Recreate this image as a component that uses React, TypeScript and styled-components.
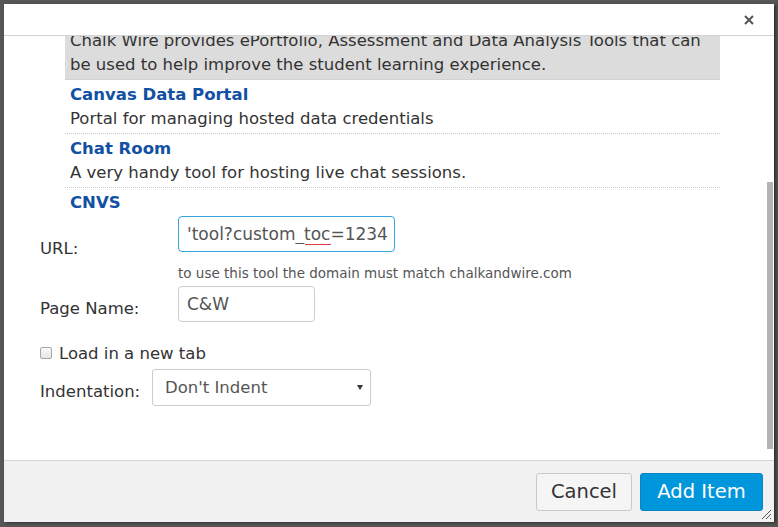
import styled, { createGlobalStyle } from "styled-components";

const GlobalStyle = createGlobalStyle`
  html, body {
    margin: 0;
    padding: 0;
    background: #565656;
  }
  body {
    font-family: "DejaVu Sans", Verdana, sans-serif;
    color: #333;
  }
`;

const Overlay = styled.div`
  width: 778px;
  height: 527px;
  padding: 4px 0 0 4px;
  box-sizing: border-box;
  background: #565656;
  overflow: hidden;
`;

const Dialog = styled.div`
  position: relative;
  width: 770px;
  height: 518px;
  background: #fff;
  display: flex;
  flex-direction: column;
  box-shadow: 2px 1px 3px rgba(0, 0, 0, 0.45);
`;

const Header = styled.div`
  height: 31px;
  flex: none;
  border-bottom: 1px solid #d4d4d4;
  display: flex;
  align-items: center;
  justify-content: flex-end;
  padding-right: 20px;
`;

const CloseButton = styled.button`
  border: 0;
  background: none;
  padding: 0;
  width: 10px;
  height: 10px;
  display: flex;
  cursor: pointer;
`;

const Body = styled.div`
  flex: 1;
  display: flex;
  overflow: hidden;
`;

const Content = styled.div`
  flex: 1;
  overflow: hidden;
`;

const ScrollTrack = styled.div`
  width: 7px;
  flex: none;
  padding-left: 1px;
`;

const ScrollThumb = styled.div`
  width: 6px;
  height: 267px;
  margin-top: 146px;
  background: #b4b4b4;
`;

const ToolList = styled.div`
  height: 175px;
  margin: 0 46px 0 61px;
  overflow: hidden;
`;

const ToolScroll = styled.ul`
  list-style: none;
  margin: -34px 0 0;
  padding: 0;
`;

const ToolItem = styled.li<{ $selected?: boolean }>`
  padding: 3px 5px 2px;
  border-bottom: 1px dotted #c9c9c9;
  background: ${(p) => (p.$selected ? "#dcdcdc" : "transparent")};
  font-size: 16.5px;
  line-height: 24px;
`;

const ToolName = styled.a`
  display: block;
  color: #1150a2;
  font-weight: bold;
  text-decoration: none;
`;

const ToolDesc = styled.div`
  color: #333;
`;

const Form = styled.div`
  padding: 5px 0 0 36px;
  font-size: 16.5px;
`;

const FieldGrid = styled.div`
  display: grid;
  grid-template-columns: 138px auto;
  row-gap: 5px;
`;

const Label = styled.label<{ $offset?: number }>`
  align-self: center;
  padding-top: ${(p) => p.$offset ?? 0}px;
  color: #333;
`;

const FieldCell = styled.div`
  display: flex;
  flex-direction: column;
  align-items: flex-start;
`;

const InputWrap = styled.div`
  position: relative;
`;

const TextInput = styled.input<{ $width: number; $focused?: boolean }>`
  display: block;
  width: ${(p) => p.$width}px;
  height: 36px;
  box-sizing: border-box;
  padding: 0 6px 0 8px;
  border: 1px solid ${(p) => (p.$focused ? "#33a5dd" : "#ccc")};
  border-radius: 4px;
  font: inherit;
  font-size: 17px;
  color: #555;
  background: #fff;
  outline: none;
`;

const SpellMark = styled.svg`
  position: absolute;
  left: 127px;
  top: 27px;
  pointer-events: none;
`;

const Hint = styled.div`
  margin-top: 13px;
  font-size: 13.5px;
  line-height: 16px;
  color: #555;
`;

const CheckRow = styled.label`
  display: flex;
  align-items: center;
  gap: 7px;
  height: 20px;
  margin-top: 21px;
  color: #333;
`;

const Checkbox = styled.input`
  appearance: none;
  width: 12px;
  height: 12px;
  margin: 0;
  border: 1px solid #a8a8a8;
  border-radius: 2px;
  background: linear-gradient(#fafafa, #e6e6e6);
`;

const SelectRow = styled.div`
  display: flex;
  align-items: center;
  gap: 8px;
  margin-top: 6px;
`;

const SelectLabel = styled.label`
  width: 104px;
  white-space: nowrap;
  padding-top: 7px;
  color: #333;
`;

const SelectWrap = styled.div`
  position: relative;
  width: 219px;
`;

const Select = styled.select`
  appearance: none;
  width: 100%;
  height: 37px;
  padding: 0 24px 0 12px;
  border: 1px solid #ccc;
  border-radius: 3px;
  background: #fff;
  font: inherit;
  font-size: 16.5px;
  color: #555;
`;

const SelectArrow = styled.span`
  position: absolute;
  right: 8px;
  top: 16px;
  width: 0;
  height: 0;
  border-left: 3px solid transparent;
  border-right: 3px solid transparent;
  border-top: 5px solid #333;
  pointer-events: none;
`;

const Footer = styled.div`
  height: 61px;
  flex: none;
  border-top: 1px solid #d6d6d6;
  background: #f1f1f1;
  display: flex;
  align-items: center;
  justify-content: flex-end;
  gap: 8px;
  padding-right: 11px;
`;

const Button = styled.button<{ $primary?: boolean; $width: number }>`
  width: ${(p) => p.$width}px;
  height: 38px;
  padding: 0;
  border-radius: 3px;
  font: inherit;
  font-size: 19.5px;
  border: 1px solid ${(p) => (p.$primary ? "#0a83c0" : "#cacaca")};
  background: ${(p) => (p.$primary ? "#0096db" : "#f5f5f5")};
  color: ${(p) => (p.$primary ? "#fff" : "#333")};
  cursor: pointer;
`;

const Grip = styled.svg`
  position: absolute;
  right: 2px;
  bottom: 2px;
`;

const tools = [
  {
    name: "Chalk & Wire",
    desc: "Chalk Wire provides ePortfolio, Assessment and Data Analysis Tools that can be used to help improve the student learning experience.",
    selected: true,
  },
  { name: "Canvas Data Portal", desc: "Portal for managing hosted data credentials" },
  { name: "Chat Room", desc: "A very handy tool for hosting live chat sessions." },
  { name: "CNVS", desc: "Course navigation and video services." },
];

export default function App() {
  return (
    <>
      <GlobalStyle />
      <Overlay>
        <Dialog>
          <Header>
            <CloseButton aria-label="Close">
              <svg width="10" height="10" viewBox="0 0 10 10">
                <path d="M1 1L9 9M9 1L1 9" stroke="#555" strokeWidth="2" />
              </svg>
            </CloseButton>
          </Header>
          <Body>
            <Content>
              <ToolList>
                <ToolScroll>
                  {tools.map((t) => (
                    <ToolItem key={t.name} $selected={t.selected}>
                      <ToolName href="#">{t.name}</ToolName>
                      <ToolDesc>{t.desc}</ToolDesc>
                    </ToolItem>
                  ))}
                </ToolScroll>
              </ToolList>
              <Form>
                <FieldGrid>
                  <Label>URL:</Label>
                  <FieldCell>
                    <InputWrap>
                      <TextInput $width={217} $focused readOnly value="'tool?custom_toc=1234" />
                      {/* spell-check squiggle under "toc" */}
                      <SpellMark width="26" height="3" viewBox="0 0 26 3">
                        <path
                          d="M0 2L1 1L2 2L3 1L4 2L5 1L6 2L7 1L8 2L9 1L10 2L11 1L12 2L13 1L14 2L15 1L16 2L17 1L18 2L19 1L20 2L21 1L22 2L23 1L24 2L25 1L26 2"
                          stroke="#e0393e"
                          strokeWidth="1"
                          fill="none"
                        />
                      </SpellMark>
                    </InputWrap>
                    <Hint>to use this tool the domain must match chalkandwire.com</Hint>
                  </FieldCell>
                  <Label $offset={8}>Page Name:</Label>
                  <FieldCell>
                    <TextInput $width={137} readOnly value="C&W" />
                  </FieldCell>
                </FieldGrid>
                <CheckRow>
                  <Checkbox type="checkbox" />
                  Load in a new tab
                </CheckRow>
                <SelectRow>
                  <SelectLabel>Indentation:</SelectLabel>
                  <SelectWrap>
                    <Select defaultValue="0">
                      <option value="0">Don't Indent</option>
                      <option value="1">Indent 1 Level</option>
                      <option value="2">Indent 2 Levels</option>
                    </Select>
                    <SelectArrow />
                  </SelectWrap>
                </SelectRow>
              </Form>
            </Content>
            <ScrollTrack>
              <ScrollThumb />
            </ScrollTrack>
          </Body>
          <Footer>
            <Button $width={96}>Cancel</Button>
            <Button $width={123} $primary>Add Item</Button>
          </Footer>
          <Grip width="11" height="11" viewBox="0 0 11 11">
            <path d="M10 1L1 10M10 5L5 10M10 9L9 10" stroke="#555" strokeWidth="1" />
          </Grip>
        </Dialog>
      </Overlay>
    </>
  );
}
